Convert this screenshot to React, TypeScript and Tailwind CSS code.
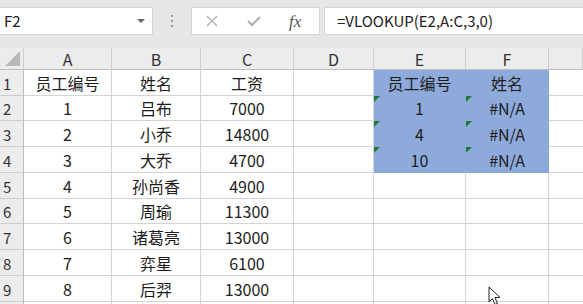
import { ReactNode } from "react";

// ─── Sheet data ───────────────────────────────────────────────

const cols = ["A", "B", "C", "D", "E", "F", ""];
const colWidths = ["w-[88px]", "w-[89px]", "w-[93px]", "w-[80px]", "w-[92px]", "w-[83px]", "flex-1"];
const rowHeights = ["h-[26px]", "h-[25px]", "h-[26px]", "h-[26px]", "h-[26px]", "h-[25px]", "h-[26px]", "h-[26px]", "h-[26px]", "h-[26px]"];

const data: string[][] = [
  ["员工编号", "姓名", "工资", "", "员工编号", "姓名"],
  ["1", "吕布", "7000", "", "1", "#N/A"],
  ["2", "小乔", "14800", "", "4", "#N/A"],
  ["3", "大乔", "4700", "", "10", "#N/A"],
  ["4", "孙尚香", "4900", "", "", ""],
  ["5", "周瑜", "11300", "", "", ""],
  ["6", "诸葛亮", "13000", "", "", ""],
  ["7", "弈星", "6100", "", "", ""],
  ["8", "后羿", "13000", "", "", ""],
  ["", "", "", "", "", ""],
];

const font = "font-['Noto_Sans_CJK_SC','Noto_Sans',sans-serif]";

// ─── Cell ─────────────────────────────────────────────────────

function Cell({ text, col, row }: { text: string; col: number; row: number }) {
  const filled = (col === 4 || col === 5) && row <= 3;
  const flag = filled && row >= 1;
  return (
    <div
      className={`relative flex items-center justify-center shrink-0 border-r border-b ${
        filled ? "bg-[#8eaadb] border-[#8eaadb]" : "bg-white border-[#d4d4d4]"
      } ${colWidths[col]}`}
    >
      {flag && (
        <svg className="absolute left-0 top-0" width="6" height="6" viewBox="0 0 6 6">
          <path d="M0 0 L6 0 L0 6 Z" fill="#1f7a3a" />
        </svg>
      )}
      <span className="text-[16px] text-[#1d1d1d] leading-none">{text}</span>
    </div>
  );
}

function Header({ children, className = "" }: { children?: ReactNode; className?: string }) {
  return (
    <div
      className={`flex items-center justify-center shrink-0 bg-[#ececec] border-r border-b border-r-[#cdcdcd] border-b-[#bdbdbd] text-[16px] text-[#333] ${className}`}
    >
      {children}
    </div>
  );
}

// ─── App ──────────────────────────────────────────────────────

export default function App() {
  return (
    <div className={`relative w-[583px] h-[304px] overflow-hidden bg-white ${font}`}>
      {/* formula bar */}
      <div className="flex items-start h-[48px] pt-[7px] bg-[#e6e6e6]">
        <div className="flex items-center justify-between w-[153px] h-[28px] bg-white border border-[#d6d6d6] border-l-0 pl-[4px] pr-[7px]">
          <span className="text-[15px] text-[#222]">F2</span>
          <span className="w-0 h-0 border-l-[4px] border-r-[4px] border-t-[4px] border-l-transparent border-r-transparent border-t-[#666]" />
        </div>
        <div className="flex flex-col items-center gap-[3px] w-[38px] pt-[8px]">
          <span className="w-[2px] h-[2px] bg-[#9a9a9a]" />
          <span className="w-[2px] h-[2px] bg-[#9a9a9a]" />
          <span className="w-[2px] h-[2px] bg-[#9a9a9a]" />
        </div>
        <div className="flex items-center w-[129px] h-[28px] bg-white border border-[#d6d6d6] pl-[13px]">
          <svg width="14" height="14" viewBox="0 0 14 14" className="mr-[28px]">
            <path d="M2 2 L12 12 M12 2 L2 12" stroke="#b0b0b0" strokeWidth="1.4" />
          </svg>
          <svg width="14" height="12" viewBox="0 0 14 12" className="mr-[28px]">
            <path d="M1 6 L5 10 L13 2" stroke="#b0b0b0" strokeWidth="2" fill="none" />
          </svg>
          <span className="font-['Liberation_Serif',serif] italic text-[17px] text-[#555] leading-none">fx</span>
        </div>
        <div className="flex items-center flex-1 h-[28px] ml-[4px] bg-white border border-[#d6d6d6] border-r-0 pl-[12px]">
          <span className="text-[15px] text-[#222]">=VLOOKUP(E2,A:C,3,0)</span>
        </div>
      </div>

      {/* column headers */}
      <div className="flex h-[22px]">
        <Header className="w-[24px] relative">
          <svg className="absolute right-[3px] bottom-[3px]" width="15" height="15" viewBox="0 0 15 15">
            <path d="M15 0 L15 15 L0 15 Z" fill="#b8b8b8" />
          </svg>
        </Header>
        {cols.map((c, i) => (
          <Header key={i} className={colWidths[i]}>
            {c}
          </Header>
        ))}
      </div>

      {/* rows */}
      {data.map((row, r) => (
        <div key={r} className={`flex ${rowHeights[r]}`}>
          <div className="flex items-end shrink-0 w-[24px] pl-[3px] bg-[#ececec] border-r border-b border-r-[#bdbdbd] border-b-[#cdcdcd] text-[15px] text-[#333] leading-[22px]">
            {r < 9 ? r + 1 : ""}
          </div>
          {row.map((t, c) => (
            <Cell key={c} text={t} col={c} row={r} />
          ))}
          <div className="flex-1 bg-white border-b border-[#d4d4d4]" />
        </div>
      ))}

      {/* mouse pointer */}
      <svg className="absolute left-[488px] top-[286px]" width="13" height="20" viewBox="0 0 13 20">
        <path d="M1 1 L1 16 L4.5 12.5 L7 18.5 L9.5 17.5 L7 11.5 L12 11.5 Z" fill="white" stroke="#222" strokeWidth="1" />
      </svg>
    </div>
  );
}
